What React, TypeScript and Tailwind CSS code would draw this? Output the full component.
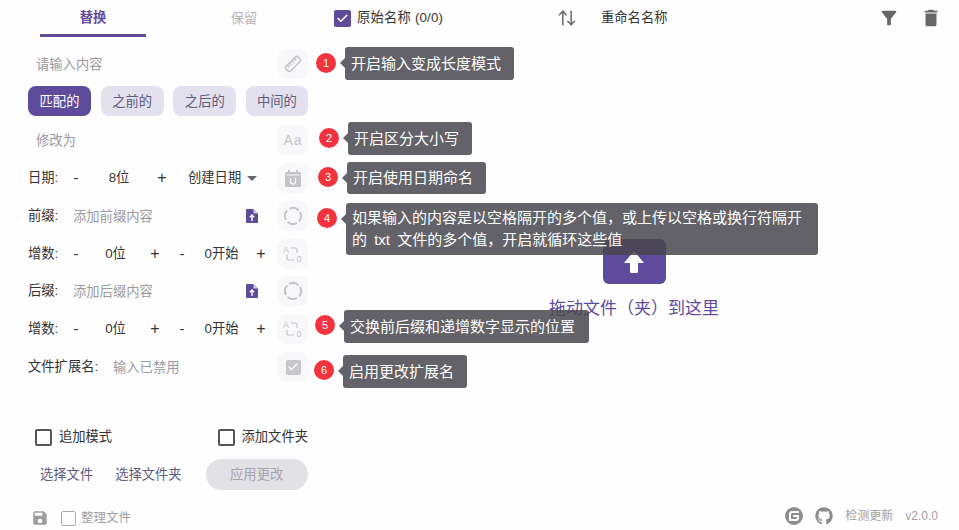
import type { ReactNode } from "react"
import { ArrowUpDown, Check, Ruler } from "lucide-react"
import { FaGithub } from "react-icons/fa"
import { MdDelete, MdFilterAlt, MdSave } from "react-icons/md"
import { SiGitee } from "react-icons/si"

function IconButton({ children }: { children: ReactNode }) {
  return (
    <div className="ml-auto flex h-[30px] w-[30px] shrink-0 items-center justify-center rounded-lg bg-[#f8f7fa] text-[#c4c4c8]">
      {children}
    </div>
  )
}

function Stepper({ label, className }: { label: string; className: string }) {
  return (
    <div className={`flex items-center justify-between text-[#333] ${className}`}>
      <span className="w-3 text-center text-[15px]">-</span>
      <span>{label}</span>
      <span className="w-3 text-center text-[16px]">+</span>
    </div>
  )
}

function CalendarIcon() {
  return (
    <svg width="16" height="17" viewBox="0 0 16 17" fill="currentColor">
      <path d="M3 0h2v2h6V0h2v2h1.500A1.500 1.500 0 0 1 16 3.500V15.500A1.500 1.500 0 0 1 14.500 17h-13A1.500 1.500 0 0 1 0 15.500V3.500A1.500 1.500 0 0 1 1.500 2H3Z" />
      <rect x="1.500" y="4.500" width="13" height="1" fill="#f8f7fa" />
      <path d="M5.500 8v3.500a2.500 2.500 0 0 0 5 0V8" fill="none" stroke="#f8f7fa" strokeWidth="1.400" />
    </svg>
  )
}

function LoopIcon() {
  return (
    <svg width="20" height="20" viewBox="0 0 20 20" fill="none" stroke="currentColor" strokeWidth="2">
      <circle cx="10" cy="10" r="8" strokeDasharray="10 2.570" transform="rotate(-30 10 10)" />
    </svg>
  )
}

function SwapIcon() {
  return (
    <svg width="20" height="20" viewBox="0 0 20 20" fill="none" stroke="currentColor" strokeWidth="1.200">
      <text x="0" y="9" fontSize="9" fill="currentColor" stroke="none">A</text>
      <text x="13.500" y="18" fontSize="9" fill="currentColor" stroke="none">0</text>
      <path d="M8 4h4a2 2 0 0 1 2 2v3" />
      <path d="M4 11v3a2 2 0 0 0 2 2h5" />
    </svg>
  )
}

function FileUpIcon() {
  return (
    <svg width="12" height="14" viewBox="0 0 12 14">
      <path d="M1 0h6.500L12 4.500V13a1 1 0 0 1-1 1H1a1 1 0 0 1-1-1V1a1 1 0 0 1 1-1Z" fill="#5f4b9b" />
      <path d="M7.500 0v4.500H12Z" fill="#cfc8e4" />
      <path d="M6 6v6M3.800 8.200 6 6 8.200 8.200" fill="none" stroke="#fff" strokeWidth="1.400" />
    </svg>
  )
}

function TextInput({ placeholder, className }: { placeholder: string; className: string }) {
  return (
    <input
      placeholder={placeholder}
      className={`h-[30px] bg-transparent text-[13.3px] outline-none placeholder:text-[#9a9a9f] ${className}`}
    />
  )
}

function Tip({ n, className, box, badgeTop = "mt-[6px]", children }: { n: number; className: string; box: string; badgeTop?: string; children: ReactNode }) {
  return (
    <div className={`absolute z-10 flex items-start ${className}`}>
      <span className={`flex h-5 w-5 shrink-0 items-center justify-center rounded-full bg-[#f5333f] text-[11px] text-white ${badgeTop}`}>
        {n}
      </span>
      <div className={`relative ml-[9px] rounded-[3px] bg-[#48464d]/85 px-[6px] text-[15px] text-white ${box}`}>
        <span className="absolute left-[-5px] top-[11px] h-0 w-0 border-y-[5px] border-r-[5px] border-y-transparent border-r-[#646268]" />
        {children}
      </div>
    </div>
  )
}

export default function App() {
  return (
    <div className="relative flex h-[530px] w-[959px] overflow-hidden bg-[#fefefe] font-['Liberation_Sans','Noto_Sans_CJK_SC',sans-serif] text-[13.3px] text-[#333]">
      {/* Left panel */}
      <div className="flex w-[320px] shrink-0 flex-col pl-[28px] pr-[12px]">
        <div className="ml-[12px] flex gap-[45px]">
          <div className="h-[37px] w-[106px] border-b-[3px] border-[#5f4b9b] pt-[8px] text-center font-bold text-[#5f4b9b]">替换</div>
          <div className="w-[106px] pt-[9px] text-center text-[#b4b4b8]">保留</div>
        </div>

        <div className="mt-[12px] flex h-[30px] items-center">
          <TextInput placeholder="请输入内容" className="w-[240px] pl-[8px]" />
          <IconButton>
            <Ruler size={18} strokeWidth={2} className="-scale-x-100" />
          </IconButton>
        </div>

        <div className="mt-[7px] flex justify-between">
          <button className="h-[30px] w-[63px] rounded-lg bg-[#5f4b9b] pt-[2px] text-white">匹配的</button>
          <button className="h-[30px] w-[63px] rounded-lg bg-[#e3e1ed] pt-[2px] text-[#5f5a7e]">之前的</button>
          <button className="h-[30px] w-[63px] rounded-lg bg-[#e3e1ed] pt-[2px] text-[#5f5a7e]">之后的</button>
          <button className="h-[30px] w-[62px] rounded-lg bg-[#e3e1ed] pt-[2px] text-[#5f5a7e]">中间的</button>
        </div>

        <div className="mt-[9px] flex h-[30px] items-center">
          <TextInput placeholder="修改为" className="w-[240px] pl-[8px]" />
          <IconButton>
            <span className="text-[14px] tracking-[1px]">Aa</span>
          </IconButton>
        </div>

        <div className="mt-[8px] flex h-[30px] items-center">
          <span className="w-[42px]">日期:</span>
          <Stepper label="8位" className="w-[98px]" />
          <span className="ml-[20px]">创建日期</span>
          <span className="ml-[6px] h-0 w-0 border-x-[5px] border-t-[5px] border-x-transparent border-t-[#666]" />
          <IconButton>
            <CalendarIcon />
          </IconButton>
        </div>

        <div className="mt-[8px] flex h-[30px] items-center">
          <span className="w-[45px]">前缀:</span>
          <TextInput placeholder="添加前缀内容" className="w-[173px]" />
          <FileUpIcon />
          <IconButton>
            <LoopIcon />
          </IconButton>
        </div>

        <div className="mt-[8px] flex h-[30px] items-center">
          <span className="w-[42px]">增数:</span>
          <Stepper label="0位" className="w-[91px]" />
          <Stepper label="0开始" className="ml-[15px] w-[91px]" />
          <IconButton>
            <SwapIcon />
          </IconButton>
        </div>

        <div className="mt-[7px] flex h-[30px] items-center">
          <span className="w-[45px]">后缀:</span>
          <TextInput placeholder="添加后缀内容" className="w-[173px]" />
          <FileUpIcon />
          <IconButton>
            <LoopIcon />
          </IconButton>
        </div>

        <div className="mt-[8px] flex h-[30px] items-center">
          <span className="w-[42px]">增数:</span>
          <Stepper label="0位" className="w-[91px]" />
          <Stepper label="0开始" className="ml-[15px] w-[91px]" />
          <IconButton>
            <SwapIcon />
          </IconButton>
        </div>

        <div className="mt-[8px] flex h-[30px] items-center">
          <span className="w-[85px]">文件扩展名:</span>
          <TextInput placeholder="输入已禁用" className="w-[150px]" />
          <IconButton>
            <span className="flex h-[15px] w-[15px] items-center justify-center rounded-[2px] bg-[#c8c8cc]">
              <Check size={12} strokeWidth={3} className="text-white" />
            </span>
          </IconButton>
        </div>

        <div className="mt-[46px] flex h-[18px] items-center pl-[7px]">
          <span className="h-[17px] w-[17px] rounded-[2px] border-2 border-[#555]" />
          <span className="ml-[7px] w-[159px]">追加模式</span>
          <span className="h-[17px] w-[17px] rounded-[2px] border-2 border-[#555]" />
          <span className="ml-[7px] whitespace-nowrap">添加文件夹</span>
        </div>

        <div className="mt-[13px] flex items-center whitespace-nowrap pl-[12px] text-[#5f5a7e]">
          <span className="shrink-0">选择文件</span>
          <span className="ml-[22px] shrink-0">选择文件夹</span>
          <button className="ml-[24px] h-[31px] w-[102px] shrink-0 rounded-full bg-[#e2e1e6] text-[#a5a3ae]">应用更改</button>
        </div>

        <div className="mt-[19px] flex items-center pl-[3px] text-[12.5px] text-[#a0a0a4]">
          <MdSave size={18} className="text-[#9e9e9e]" />
          <span className="ml-[12px] h-[15px] w-[15px] rounded-[2px] border border-[#aaa]" />
          <span className="ml-[5px]">整理文件</span>
        </div>
      </div>

      {/* Right panel */}
      <div className="flex min-w-0 flex-1 flex-col">
        <div className="flex h-[36px] items-center pl-[14px]">
          <span className="flex h-[17px] w-[17px] items-center justify-center rounded-[2px] bg-[#5f4b9b]">
            <Check size={13} strokeWidth={3} className="text-white" />
          </span>
          <span className="ml-[6px] w-[200px] tracking-[0.2px]">原始名称 (0/0)</span>
          <ArrowUpDown size={20} strokeWidth={1.8} className="text-[#666]" />
          <span className="ml-[24px]">重命名名称</span>
          <MdFilterAlt size={22} className="ml-auto text-[#666]" />
          <MdDelete size={22} className="ml-[20px] mr-[17px] text-[#666]" />
        </div>

        <div className="flex flex-1 flex-col items-center pr-[11px] pt-[203px]">
          <div className="flex h-[45px] w-[63px] items-center justify-center rounded-md bg-[#5f4b9b]">
            <svg width="20" height="24" viewBox="0 0 20 24" fill="#fff">
              <path d="M10 1 20 13H14V21.500a1.500 1.500 0 0 1-1.500 1.500h-5A1.500 1.500 0 0 1 6 21.500V13H0Z" />
            </svg>
          </div>
          <span className="mt-[12px] text-[17px] text-[#5f4b9b]">拖动文件（夹）到这里</span>
        </div>

        <div className="flex h-[26px] items-center justify-end pb-[3px] pr-[21px] text-[12px] text-[#a0a0a4]">
          <SiGitee size={18} className="text-[#8e8e8e]" />
          <FaGithub size={18} className="ml-[12px] text-[#8e8e8e]" />
          <span className="ml-[12px]">检测更新</span>
          <span className="ml-[12px]">v2.0.0</span>
        </div>
      </div>

      {/* Numbered hints over the page */}
      <Tip n={1} className="left-[316px] top-[47px]" box="h-[33px] w-[169px] leading-[33px]">开启输入变成长度模式</Tip>
      <Tip n={2} className="left-[319px] top-[122px]" box="h-[33px] w-[124px] leading-[33px]">开启区分大小写</Tip>
      <Tip n={3} className="left-[318px] top-[162px]" box="h-[32px] w-[139px] leading-[32px]" badgeTop="mt-[5px]">开启使用日期命名</Tip>
      <Tip n={4} className="left-[317px] top-[203px]" box="w-[472px] py-[4px] leading-[22px] [word-spacing:3px]" badgeTop="mt-[5px]">
        如果输入的内容是以空格隔开的多个值，或上传以空格或换行符隔开的 txt 文件的多个值，开启就循环这些值
      </Tip>
      <Tip n={5} className="left-[315px] top-[310px]" box="h-[33px] w-[245px] leading-[33px]" badgeTop="mt-[5px]">交换前后缀和递增数字显示的位置</Tip>
      <Tip n={6} className="left-[314px] top-[355px]" box="h-[33px] w-[124px] leading-[33px]" badgeTop="mt-[5px]">启用更改扩展名</Tip>
    </div>
  )
}
